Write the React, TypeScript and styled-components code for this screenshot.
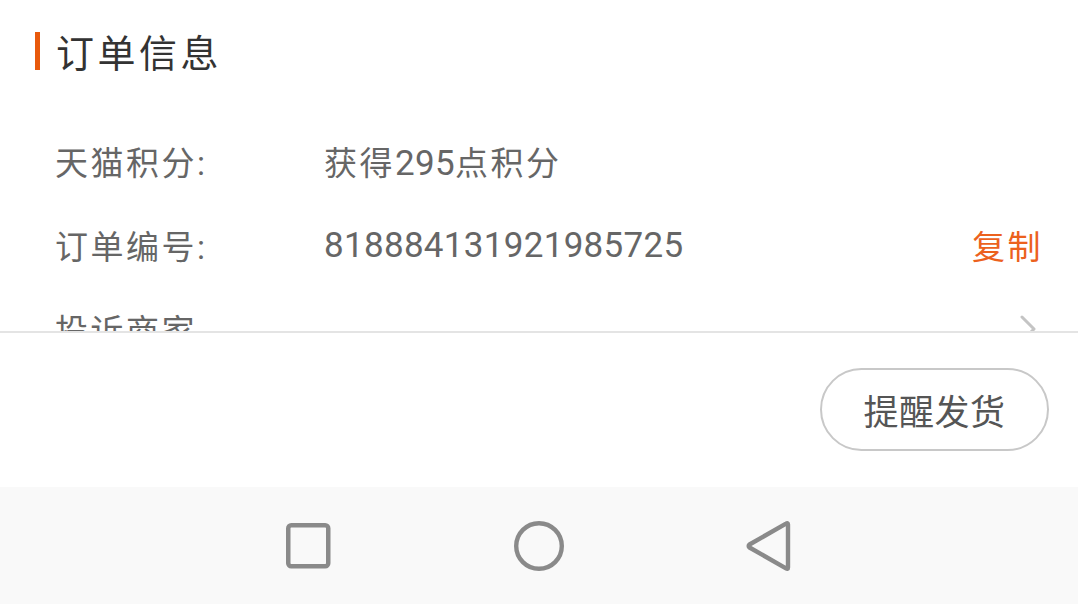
import React from "react";
import styled, { createGlobalStyle } from "styled-components";

const Global = createGlobalStyle`
  html, body { margin: 0; padding: 0; background: #ffffff; }
  body { font-family: Roboto, "Noto Sans CJK SC", sans-serif; }
`;

const Page = styled.div`
  width: 1078px;
  height: 604px;
  display: flex;
  flex-direction: column;
  overflow: hidden;
  background: #ffffff;
`;

const Scroll = styled.div`
  height: 331px;
  overflow: hidden;
  display: flex;
  flex-direction: column;
`;

const TitleBar = styled.div`
  height: 119px;
  flex-shrink: 0;
  display: flex;
  align-items: flex-start;
  padding: 32px 0 0 35px;
  box-sizing: border-box;
  gap: 16px;
`;

const Accent = styled.div`
  width: 5px;
  height: 38px;
  background: #e8590c;
`;

const Title = styled.h2`
  margin: -3px 0 0;
  font-size: 38px;
  font-weight: 400;
  line-height: 50px;
  letter-spacing: 3.5px;
  color: #333333;
`;

const Row = styled.div`
  height: 84px;
  flex-shrink: 0;
  display: flex;
  align-items: center;
  padding: 0 35px 0 55px;
  font-size: 33px;
  letter-spacing: 2.5px;
  color: #666666;
`;

const Label = styled.span`
  width: 269px;
  flex-shrink: 0;
`;

const Value = styled.span`
  flex: 1;
`;

const Num = styled.span`
  font-size: 35px;
  letter-spacing: 0.3px;
`;

const Action = styled.span<{ $accent?: boolean }>`
  color: ${(p) => (p.$accent ? "#ec611d" : "#666666")};
  display: flex;
  align-items: center;
`;

const Chevron = styled.svg`
  display: block;
  margin-right: 6px;
`;

const Footer = styled.div`
  flex: 1;
  border-top: 2px solid #e4e4e4;
  display: flex;
  align-items: center;
  justify-content: flex-end;
  padding-right: 29px;
`;

const PillButton = styled.button`
  width: 229px;
  height: 83px;
  border-radius: 42px;
  border: 2px solid #c8c8c8;
  background: #ffffff;
  font-family: "Noto Sans CJK SC", sans-serif;
  font-size: 35px;
  letter-spacing: 0.5px;
  color: #555555;
  margin-top: -1px;
  padding: 0;
`;

const NavBar = styled.div`
  height: 117px;
  flex-shrink: 0;
  background: #f9f9f9;
  display: flex;
  align-items: center;
  justify-content: center;
  gap: 181px;
`;

const NavIcon = styled.svg`
  display: block;
`;

export default function App() {
  return (
    <>
      <Global />
      <Page>
        <Scroll>
          <TitleBar>
            <Accent />
            <Title>订单信息</Title>
          </TitleBar>
          <Row>
            <Label>天猫积分:</Label>
            <Value>
              获得<Num>295</Num>点积分
            </Value>
          </Row>
          <Row>
            <Label>订单编号:</Label>
            <Value>
              <Num>818884131921985725</Num>
            </Value>
            <Action $accent>复制</Action>
          </Row>
          <Row>
            <Label>投诉商家</Label>
            <Value />
            <Action>
              <Chevron width="18" height="30" viewBox="0 0 18 30">
                <path d="M3 3 L15 15 L3 27" fill="none" stroke="#c4c4c4" strokeWidth="3" strokeLinecap="round" strokeLinejoin="round" />
              </Chevron>
            </Action>
          </Row>
        </Scroll>
        <Footer>
          <PillButton>提醒发货</PillButton>
        </Footer>
        <NavBar>
          <NavIcon width="50" height="50" viewBox="0 0 50 50">
            <rect x="5.25" y="4.25" width="40" height="41" rx="3" fill="none" stroke="#8a8a8a" strokeWidth="4.5" />
          </NavIcon>
          <NavIcon width="50" height="50" viewBox="0 0 50 50">
            <circle cx="25" cy="25" r="22.8" fill="none" stroke="#8a8a8a" strokeWidth="4.4" />
          </NavIcon>
          <NavIcon width="50" height="50" viewBox="0 0 50 50">
            <path d="M43 3.5 L43 46.5 Q43 48.5 41 47.3 L4.5 26.5 Q2.8 25 4.5 23.5 L41 2.7 Q43 1.5 43 3.5 Z" fill="none" stroke="#8a8a8a" strokeWidth="4.4" strokeLinejoin="round" />
          </NavIcon>
        </NavBar>
      </Page>
    </>
  );
}
